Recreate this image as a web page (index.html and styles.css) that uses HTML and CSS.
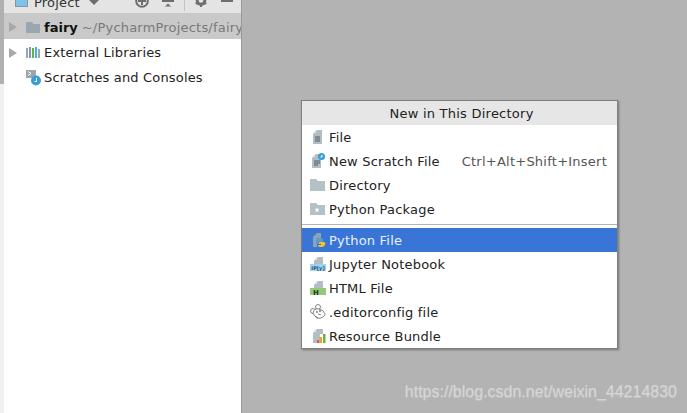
FILE: index.html
```html
<!DOCTYPE html>
<html lang="en">
<head>
<meta charset="utf-8">
<title>New in This Directory</title>
<link rel="stylesheet" href="styles.css">
</head>
<body>
<div class="screen">
  <aside class="rail"></aside>
  <section class="panel">
    <header class="toolbar">
      <svg class="ico-proj" width="13" height="7" viewBox="0 0 13 7"><rect x="0.500" y="-3" width="12" height="9.500" fill="#7fc4e8" stroke="#8a949b"/></svg>
      <span class="toolbar-title">Project</span>
      <svg class="caret" width="10" height="5" viewBox="0 0 10 5"><path d="M0 0h10L5 5z" fill="#6e6e6e"/></svg>
      <svg class="tool-globe" width="14" height="8" viewBox="0 0 14 8"><circle cx="7" cy="1" r="5.800" fill="none" stroke="#6e6e6e" stroke-width="2"/><path d="M7 -3v8M3 1h8" stroke="#6e6e6e" stroke-width="2"/></svg>
      <svg class="tool-collapse" width="12" height="7" viewBox="0 0 12 7"><rect x="0" y="0" width="12" height="2" fill="#6e6e6e"/><path d="M3 6.500h6L6 3.500z" fill="#6e6e6e"/></svg>
      <span class="tool-sep"></span>
      <svg class="tool-gear" width="12" height="7" viewBox="0 0 12 7"><circle cx="6" cy="0.500" r="3.800" fill="none" stroke="#6e6e6e" stroke-width="3"/><path d="M0 3l2-1 1 2-1 1zM12 3l-2-1-1 2 1 1zM5 4h2v3H5z" fill="#6e6e6e"/></svg>
      <span class="tool-hide"></span>
    </header>
    <ul class="tree">
      <li class="tree-row selected">
        <svg class="arrow" width="8" height="10" viewBox="0 0 8 10"><path d="M0 0l8 5-8 5z" fill="#a8a8a8"/></svg>
        <svg class="tree-icon" width="14" height="11" viewBox="0 0 14 11"><path d="M0 0h6l1.500 2H14v9H0z" fill="#9aa7b0"/></svg>
        <span class="tree-name">fairy</span>
        <span class="tree-path">~/PycharmProjects/fairy</span>
      </li>
      <li class="tree-row">
        <svg class="arrow" width="8" height="10" viewBox="0 0 8 10"><path d="M0 0l8 5-8 5z" fill="#a8a8a8"/></svg>
        <svg class="tree-icon" width="14" height="11" viewBox="0 0 14 11"><rect x="0" y="1" width="2" height="10" fill="#9aa7b0"/><rect x="3" y="0" width="2" height="11" fill="#7f98ad"/><rect x="6" y="1" width="2" height="10" fill="#62b543"/><rect x="9" y="0" width="2" height="11" fill="#40b6e0"/><rect x="12" y="2" width="2" height="9" fill="#9aa7b0"/></svg>
        <span class="tree-label">External Libraries</span>
      </li>
      <li class="tree-row">
        <span class="arrow-space"></span>
        <svg class="tree-icon scratch" width="16" height="16" viewBox="0 0 16 16"><path d="M0 0h10v8H0z" fill="#9aa7b0"/><path d="M2 1.500l3 2-3 2" fill="none" stroke="#fff"/><circle cx="10" cy="10.500" r="5" fill="#389fd6"/><path d="M10.500 8v3.500h-2" fill="none" stroke="#fff"/></svg>
        <span class="tree-label">Scratches and Consoles</span>
      </li>
    </ul>
  </section>
  <main class="editor">
    <div class="popup">
      <div class="popup-title">New in This Directory</div>
      <ul class="menu">
        <li class="item">
          <svg class="item-icon" width="16" height="16" viewBox="0 0 16 16"><path d="M3 5l4-4h5v14H3z" fill="#b3bdc4"/><path d="M3 4l3-3v3z" fill="#dfe3e6"/><path d="M5 8h5M5 10h5M5 12h5" stroke="#4d5860"/></svg>
          <span class="item-label">File</span>
        </li>
        <li class="item">
          <svg class="item-icon" width="16" height="16" viewBox="0 0 16 16"><path d="M2 5l4-4h5v14H2z" fill="#b3bdc4"/><path d="M2 4l3-3v3z" fill="#dfe3e6"/><path d="M4 8h6M4 10h6M4 12h4" stroke="#4d5860"/><circle cx="11.500" cy="3.500" r="3.500" fill="#389fd6"/><path d="M12 2v2h-1.500" stroke="#fff" fill="none"/></svg>
          <span class="item-label">New Scratch File</span>
          <span class="shortcut">Ctrl+Alt+Shift+Insert</span>
        </li>
        <li class="item">
          <svg class="item-icon" width="16" height="16" viewBox="0 0 16 16"><path d="M0 2h6l2 2h7v10H0z" fill="#b6c0c7"/></svg>
          <span class="item-label">Directory</span>
        </li>
        <li class="item">
          <svg class="item-icon" width="16" height="16" viewBox="0 0 16 16"><path d="M0 2h6l2 2h7v10H0z" fill="#b6c0c7"/><rect x="5.500" y="7.500" width="3" height="3" fill="#fff"/></svg>
          <span class="item-label">Python Package</span>
        </li>
      </ul>
      <hr class="divider">
      <ul class="menu">
        <li class="item active">
          <svg class="item-icon" width="16" height="16" viewBox="0 0 16 16"><path d="M3 5l4-4h4v5H7v9H3z" fill="#8fa3b5"/><path d="M8 6h3q2 0 2 2v2H8v1h1v1H6V9q0-3 2-3z" fill="#5a9ad0"/><path d="M9 10h5q2 0 1 3-1 2-3 2h-2q-2 0-2-2h3v-1H9z" fill="#f0c330"/></svg>
          <span class="item-label">Python File</span>
        </li>
        <li class="item">
          <svg class="item-icon" width="16" height="16" viewBox="0 0 16 16"><path d="M4 5l4-4h5v7H4z" fill="#b3bdc4"/><path d="M4 4l3-3v3z" fill="#dfe3e6"/><rect x="0" y="8" width="16" height="7" fill="#9fd3ec"/><text class="ipy" x="8" y="13.800">IP[y]</text></svg>
          <span class="item-label">Jupyter Notebook</span>
        </li>
        <li class="item">
          <svg class="item-icon" width="16" height="16" viewBox="0 0 16 16"><path d="M4 5l4-4h5v7H4z" fill="#b3bdc4"/><path d="M4 4l3-3v3z" fill="#dfe3e6"/><rect x="0" y="8" width="16" height="7" fill="#94c97b"/><text class="htm" x="3" y="14.500">H</text></svg>
          <span class="item-label">HTML File</span>
        </li>
        <li class="item">
          <svg class="item-icon" width="16" height="16" viewBox="0 0 16 16" fill="#fff" stroke="#666" stroke-width="0.800"><circle cx="3" cy="7" r="2.500"/><circle cx="8" cy="3" r="2.500"/><path d="M3 9q1-5 6-4 5 1 6 5 0 2-2 3-3 2-6 1-3-2-4-5z"/><circle cx="7" cy="8" r="0.700"/><circle cx="10" cy="7" r="0.700"/><path d="M8 10l3 1M5 12l3 2"/></svg>
          <span class="item-label">.editorconfig file</span>
        </li>
        <li class="item">
          <svg class="item-icon" width="16" height="16" viewBox="0 0 16 16"><path d="M3 5l4-4h6v5H10v9H3z" fill="#b3bdc4"/><path d="M3 4l3-3v3z" fill="#dfe3e6"/><rect x="7" y="12" width="2" height="3" fill="#e05555"/><rect x="9.500" y="9" width="2.500" height="6" fill="#f0a030"/><rect x="13" y="6" width="2.500" height="9" fill="#62b543"/></svg>
          <span class="item-label">Resource Bundle</span>
        </li>
      </ul>
    </div>
    <div class="watermark">https://blog.csdn.net/weixin_44214830</div>
  </main>
</div>
</body>
</html>
```

FILE: styles.css
```css
* { box-sizing: border-box; }
html, body { margin: 0; padding: 0; }
body { width: 687px; height: 413px; overflow: hidden; font-family: "DejaVu Sans", sans-serif; font-size: 13px; letter-spacing: .2px; color: #222; }
ul { list-style: none; margin: 0; padding: 0; }
.screen { display: flex; width: 687px; height: 413px; }
.rail { width: 4px; background: linear-gradient(#b0b0b0 84px, #f0f0f0 84px); }
.panel { width: 238px; background: #fff; border-right: 1px solid #999; overflow: hidden; }
.toolbar { height: 13px; background: #e4e4e4; display: flex; align-items: flex-start; padding-left: 11px; overflow: hidden; }
.ico-proj { flex: none; }
.toolbar-title { width: 47px; flex: none; margin: -5px 0 0 6px; font-size: 13px; line-height: 16px; color: #333; }
.caret { margin-left: 8px; flex: none; }
.tool-globe { margin-left: 36px; flex: none; }
.tool-collapse { margin-left: 13px; flex: none; }
.tool-sep { width: 1px; height: 11px; background: #c4c4c4; margin-left: 10px; flex: none; }
.tool-gear { margin-left: 10px; flex: none; }
.tool-hide { width: 12px; height: 2px; background: #6e6e6e; margin-left: 14px; flex: none; }
.tree-row { height: 25px; display: flex; align-items: center; white-space: nowrap; padding: 2px 0 0 5px; }
.tree-row.selected { background: #c9c9c9; height: 26px; }
.arrow, .arrow-space { width: 8px; flex: none; margin-right: 9px; }
.tree-icon { flex: none; margin-right: 4px; }
.tree-icon.scratch { margin-right: 2px; }
.tree-name { font-weight: 700; letter-spacing: 0; color: #111; margin-right: 4px; }
.tree-path { color: #7a7a7a; }
.tree-label { color: #222; letter-spacing: .17px; }
.editor { flex: 1; background: #b3b3b3; position: relative; }
.popup { position: absolute; left: 59px; top: 100px; width: 317px; height: 249px; background: #fff; border: 1px solid #7f7f7f; box-shadow: 1px 1px 2px rgba(0,0,0,.35); }
.popup-title { height: 24px; padding-left: 4px; background: #e6e6e6; text-align: center; line-height: 25px; letter-spacing: .24px; }
.item { height: 24px; display: flex; align-items: center; padding-left: 8px; white-space: nowrap; }
.item-icon { flex: none; margin-right: 3px; }
.item-label { flex: 1; letter-spacing: .2px; }
.shortcut { color: #555; padding-right: 10px; letter-spacing: .24px; }
.item.active { background: #3875d7; color: #eaf0fb; }
.divider { border: 0; border-top: 1px solid #b5b5b5; margin: 3px 0; height: 0; }
.ipy { font: 700 5px "DejaVu Sans", sans-serif; letter-spacing: 0; fill: #23527c; text-anchor: middle; }
.htm { font: 700 7px "DejaVu Sans", sans-serif; letter-spacing: 0; fill: #1d3b12; }
.watermark { position: absolute; right: 10px; top: 383px; font-family: "Liberation Sans", sans-serif; font-size: 16px; letter-spacing: 0; color: #d6d6d6; text-shadow: 0 1px 1px rgba(255,255,255,.25); }
```
